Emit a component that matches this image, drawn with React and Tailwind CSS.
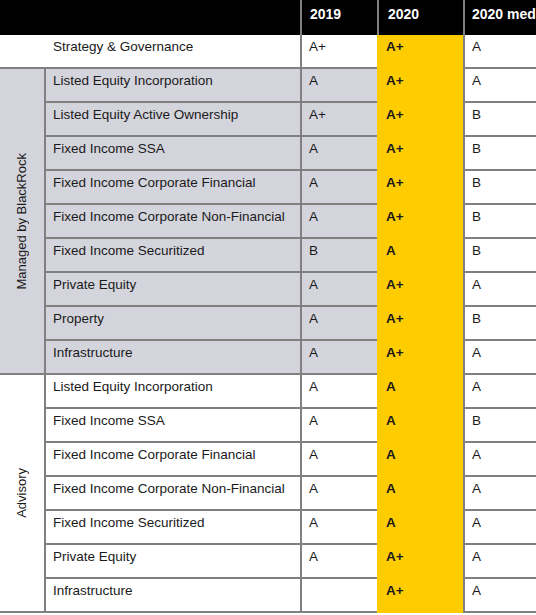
import React from 'react';

const managed = [
  ['Listed Equity Incorporation', 'A', 'A+', 'A'],
  ['Listed Equity Active Ownership', 'A+', 'A+', 'B'],
  ['Fixed Income SSA', 'A', 'A+', 'B'],
  ['Fixed Income Corporate Financial', 'A', 'A+', 'B'],
  ['Fixed Income Corporate Non-Financial', 'A', 'A+', 'B'],
  ['Fixed Income Securitized', 'B', 'A', 'B'],
  ['Private Equity', 'A', 'A+', 'A'],
  ['Property', 'A', 'A+', 'B'],
  ['Infrastructure', 'A', 'A+', 'A'],
];

const advisory = [
  ['Listed Equity Incorporation', 'A', 'A', 'A'],
  ['Fixed Income SSA', 'A', 'A', 'B'],
  ['Fixed Income Corporate Financial', 'A', 'A', 'A'],
  ['Fixed Income Corporate Non-Financial', 'A', 'A', 'A'],
  ['Fixed Income Securitized', 'A', 'A', 'A'],
  ['Private Equity', 'A', 'A+', 'A'],
  ['Infrastructure', '', 'A+', 'A'],
];

function Row({ row, shaded }) {
  const [label, y2019, y2020, median] = row;
  const bg = shaded ? 'bg-[#d4d4dc]' : 'bg-white';
  return (
    <>
      <div className={`h-[34px] pl-[7px] pt-1 whitespace-nowrap ${bg} border-b-2 border-r-2 border-[#808080]`}>{label}</div>
      <div className={`h-[34px] pl-[7px] pt-1 ${bg} border-b-2 border-[#808080]`}>{y2019}</div>
      <div className="h-[34px] pl-[9px] pt-1 font-bold bg-[#ffcc00] border-r-2 border-[#808080]">{y2020}</div>
      <div className="h-[34px] pl-[7px] pt-1 bg-white border-b-2 border-[#808080]">{median}</div>
    </>
  );
}

function Group({ name, rows, shaded, span }) {
  return (
    <>
      <div className={`${span} flex items-center justify-center border-r-2 border-b-2 border-[#808080] ${shaded ? 'bg-[#d4d4dc]' : 'bg-white'}`}>
        <span className="[writing-mode:vertical-rl] rotate-180 whitespace-nowrap text-[13px]">{name}</span>
      </div>
      {rows.map((r, i) => (
        <Row key={i} row={r} shaded={shaded} />
      ))}
    </>
  );
}

export default function App() {
  return (
    <div className="w-[536px] h-[615px] overflow-hidden bg-white text-[13.5px] leading-4 text-[#1a1a1a] [font-family:'Liberation_Sans',Arial,sans-serif]">
      <div className="grid w-[556px] grid-cols-[46px_256px_75px_88px_91px]">
        {/* header */}
        <div className="col-span-2 h-[35px] bg-black border-r-2 border-[#808080]" />
        <div className="h-[35px] bg-black pl-2 pt-[6px] text-[14px] font-bold text-white">2019</div>
        <div className="h-[35px] bg-black border-l-2 border-r-2 border-[#808080] pl-[9px] pt-[6px] text-[14px] font-bold text-white">2020</div>
        <div className="h-[35px] bg-black pl-[7px] pt-[6px] text-[14px] font-bold text-white whitespace-nowrap">2020 median</div>

        {/* strategy row */}
        <div className="col-span-2 h-[34px] pl-[53px] pt-1 border-b-2 border-r-2 border-[#808080]">Strategy &amp; Governance</div>
        <div className="h-[34px] pl-[7px] pt-1 border-b-2 border-[#808080]">A+</div>
        <div className="h-[34px] pl-[9px] pt-1 font-bold bg-[#ffcc00] border-r-2 border-[#808080]">A+</div>
        <div className="h-[34px] pl-[7px] pt-1 border-b-2 border-[#808080]">A</div>

        <Group name="Managed by BlackRock" rows={managed} shaded span="row-span-9" />
        <Group name="Advisory" rows={advisory} span="row-span-7" />
      </div>
    </div>
  );
}
